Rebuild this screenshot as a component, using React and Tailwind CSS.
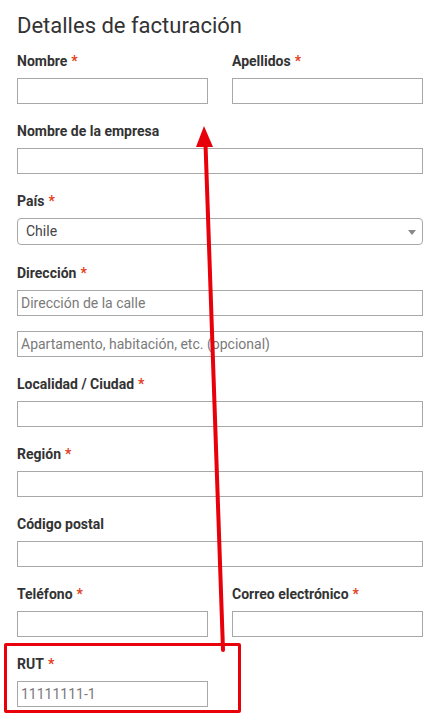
import React from 'react';

const Label = ({ children, required }) => (
  <label className="block h-[22px] text-[14px] leading-[22px] font-bold text-[#333] mb-[6px]">
    {children}
    {required && <span className="text-[#e2401c] ml-1">*</span>}
  </label>
);

const Input = ({ placeholder, className = '' }) => (
  <input
    type="text"
    placeholder={placeholder}
    className={`block w-full h-[26px] border border-[#a8a8a8] bg-white px-[3px] text-[14px] text-[#444] placeholder:text-[#7a7a7a] outline-none ${className}`}
  />
);

const Field = ({ label, required, placeholder }) => (
  <div className="mb-4">
    <Label required={required}>{label}</Label>
    <Input placeholder={placeholder} />
  </div>
);

export default function App() {
  return (
    <div className="relative w-[447px] h-[722px] bg-white overflow-hidden" style={{ fontFamily: 'Roboto, "Liberation Sans", sans-serif' }}>
      <div className="pl-[17px] pr-[24px] pt-[11px]">
        <h3 className="text-[22px] leading-[30px] font-normal text-[#333] mb-[9px]">Detalles de facturación</h3>

        <div className="grid grid-cols-2 gap-x-6">
          <Field label="Nombre" required />
          <Field label="Apellidos" required />
        </div>

        <Field label="Nombre de la empresa" />

        <div className="mb-[17px]">
          <Label required>País</Label>
          <div className="relative h-[27px] border border-[#a8a8a8] rounded-[4px] flex items-center pl-[8px] text-[14px] text-[#444]">
            Chile
            <span className="absolute right-[6px] top-[11px] w-0 h-0 border-l-[4px] border-r-[4px] border-t-[5px] border-l-transparent border-r-transparent border-t-[#888]" />
          </div>
        </div>

        <div className="mb-4">
          <Label required>Dirección</Label>
          <Input placeholder="Dirección de la calle" className="mb-[15px]" />
          <Input placeholder="Apartamento, habitación, etc. (opcional)" />
        </div>

        <Field label="Localidad / Ciudad" required />
        <Field label="Región" required />
        <Field label="Código postal" />

        <div className="grid grid-cols-2 gap-x-6">
          <Field label="Teléfono" required />
          <Field label="Correo electrónico" required />
        </div>

        <div className="grid grid-cols-2 gap-x-6">
          <Field label="RUT" required placeholder="11111111-1" />
        </div>
      </div>

      {/* annotation overlay */}
      <div className="absolute left-[4px] top-[643px] w-[237px] h-[70px] border-[3px] border-[#e8000b] rounded-[2px] pointer-events-none" />
      <svg className="absolute inset-0 pointer-events-none" width="447" height="722" viewBox="0 0 447 722">
        <line x1="223" y1="650" x2="205.5" y2="144" stroke="#e8000b" strokeWidth="4" strokeLinecap="round" />
        <polygon points="204,126 196,147 213,147" fill="#e8000b" />
      </svg>
    </div>
  );
}
